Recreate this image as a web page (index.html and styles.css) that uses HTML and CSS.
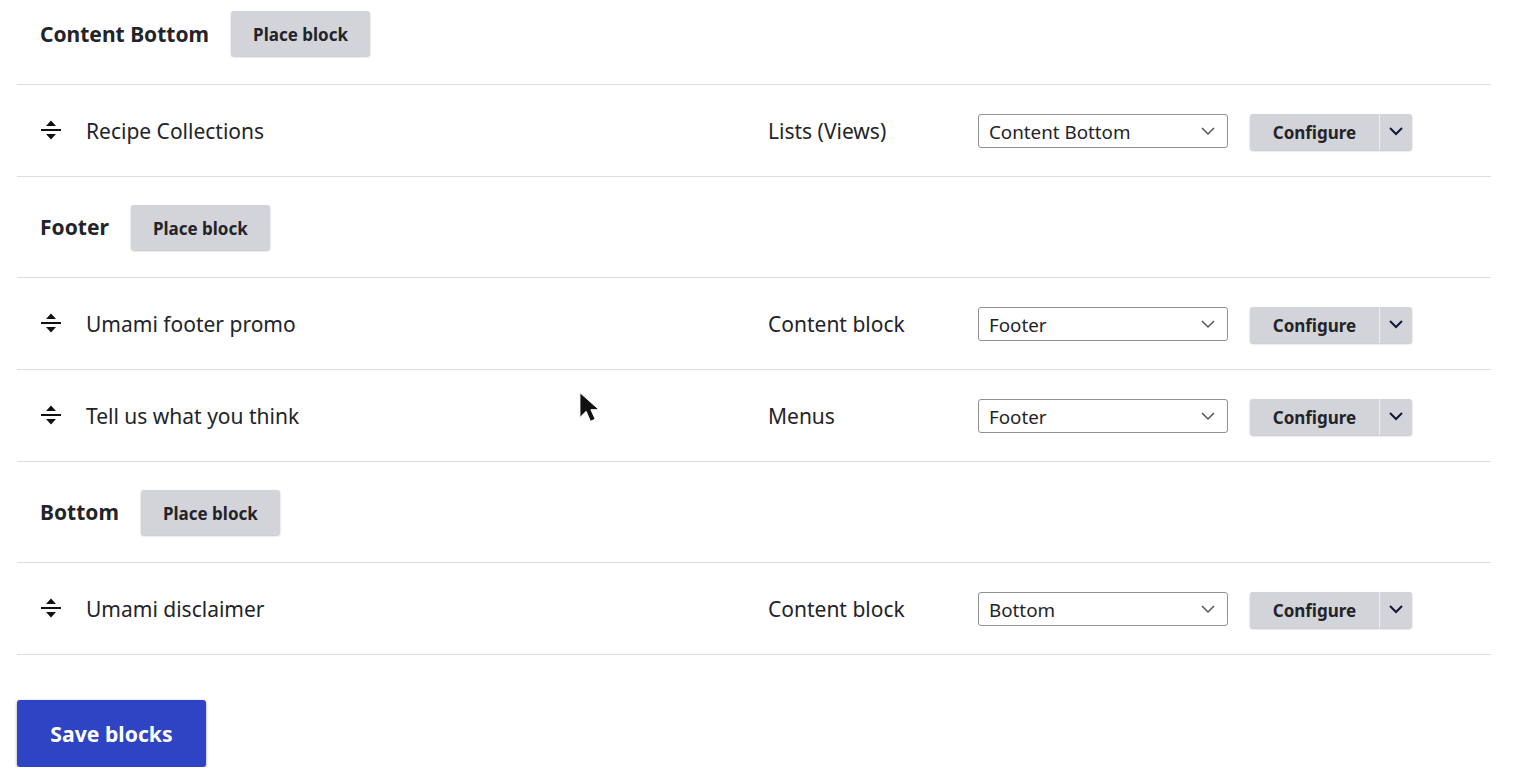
FILE: index.html
```html
<!DOCTYPE html>
<html lang="en">
<head>
  <meta charset="UTF-8">
  <meta name="viewport" content="width=device-width, initial-scale=1.0">
  <title>Block layout</title>
  <link rel="stylesheet" href="styles.css">
</head>
<body>
  <svg class="sprites" width="0" height="0" aria-hidden="true">
    <symbol id="handle" viewBox="0 0 20 20">
      <path d="M10 0.5 15 6H5z M0 9h20v2H0z M5 14h10l-5 5.5z"/>
    </symbol>
  </svg>
  <form class="container">
    <table class="blocks">
      <colgroup>
        <col class="col-name">
        <col class="col-category">
        <col class="col-region">
        <col>
      </colgroup>
      <tbody>
        <tr class="region-row region-first">
          <td colspan="4"><div class="region-head"><span class="region-title">Content Bottom</span><button type="button" class="btn">Place block</button></div></td>
        </tr>
        <tr class="block-row">
          <td><div class="block-name"><svg class="handle"><use href="#handle"/></svg>Recipe Collections</div></td>
          <td>Lists (Views)</td>
          <td><div class="select">Content Bottom<svg class="select-arrow" viewBox="0 0 14 9"><path d="M1 1l6 6 6-6"/></svg></div></td>
          <td><div class="dropbutton"><button type="button" class="drop-main">Configure</button><button type="button" class="drop-toggle" aria-label="List additional actions"><svg viewBox="0 0 14 9"><path d="M1 1l6 6 6-6"/></svg></button></div></td>
        </tr>
        <tr class="region-row">
          <td colspan="4"><div class="region-head"><span class="region-title">Footer</span><button type="button" class="btn">Place block</button></div></td>
        </tr>
        <tr class="block-row">
          <td><div class="block-name"><svg class="handle"><use href="#handle"/></svg>Umami footer promo</div></td>
          <td>Content block</td>
          <td><div class="select">Footer<svg class="select-arrow" viewBox="0 0 14 9"><path d="M1 1l6 6 6-6"/></svg></div></td>
          <td><div class="dropbutton"><button type="button" class="drop-main">Configure</button><button type="button" class="drop-toggle" aria-label="List additional actions"><svg viewBox="0 0 14 9"><path d="M1 1l6 6 6-6"/></svg></button></div></td>
        </tr>
        <tr class="block-row">
          <td><div class="block-name"><svg class="handle"><use href="#handle"/></svg>Tell us what you think</div></td>
          <td>Menus</td>
          <td><div class="select">Footer<svg class="select-arrow" viewBox="0 0 14 9"><path d="M1 1l6 6 6-6"/></svg></div></td>
          <td><div class="dropbutton"><button type="button" class="drop-main">Configure</button><button type="button" class="drop-toggle" aria-label="List additional actions"><svg viewBox="0 0 14 9"><path d="M1 1l6 6 6-6"/></svg></button></div></td>
        </tr>
        <tr class="region-row">
          <td colspan="4"><div class="region-head"><span class="region-title">Bottom</span><button type="button" class="btn">Place block</button></div></td>
        </tr>
        <tr class="block-row">
          <td><div class="block-name"><svg class="handle"><use href="#handle"/></svg>Umami disclaimer</div></td>
          <td>Content block</td>
          <td><div class="select">Bottom<svg class="select-arrow" viewBox="0 0 14 9"><path d="M1 1l6 6 6-6"/></svg></div></td>
          <td><div class="dropbutton"><button type="button" class="drop-main">Configure</button><button type="button" class="drop-toggle" aria-label="List additional actions"><svg viewBox="0 0 14 9"><path d="M1 1l6 6 6-6"/></svg></button></div></td>
        </tr>
      </tbody>
    </table>
    <button type="button" class="btn-save">Save blocks</button>
  </form>
  <svg class="cursor" viewBox="0 0 21 32"><path d="M1 1v26l6.5-6.5 4.5 10.5 5-2.2-4.5-10H21z" fill="#111" stroke="#fff" stroke-width="1"/></svg>
</body>
</html>
```

FILE: styles.css
```css
body {
  margin: 0;
  padding: 0;
  background: #fff;
  color: #232429;
  font-family: "Noto Sans", sans-serif;
  font-size: 21px;
  overflow: hidden;
}
.sprites {
  display: block;
}
.container {
  width: 1474px;
  margin-left: 17px;
  padding-top: 1px;
}
.blocks {
  width: 100%;
  border-collapse: collapse;
  table-layout: fixed;
}
.col-name {
  width: 727px;
}
.col-category {
  width: 210px;
}
.col-region {
  width: 272px;
}
.blocks td {
  padding: 0 0 0 24px;
  border-bottom: 1px solid #dedfe4;
}
.blocks td:first-child {
  padding-left: 23px;
}
.region-row td {
  height: 100px;
}
.region-first td {
  height: 65px;
  padding-bottom: 18px;
}
.block-row td {
  height: 91px;
}
.region-head {
  display: flex;
  align-items: center;
}
.region-title {
  margin-right: 22px;
  font-weight: 700;
}
.btn {
  box-sizing: border-box;
  width: 139px;
  height: 45px;
  padding: 2px 0 0;
  border: 0;
  border-radius: 3px;
  background: #d3d4d9;
  box-shadow: 0 1px 2px rgba(0, 0, 0, 0.25);
  color: #232429;
  font: 700 17px "Noto Sans", sans-serif;
}
.block-name {
  display: flex;
  align-items: center;
  gap: 25px;
  padding-left: 1px;
}
.handle {
  width: 20px;
  height: 20px;
  margin-bottom: 2px;
  fill: #111;
}
.select {
  display: flex;
  align-items: center;
  justify-content: space-between;
  box-sizing: border-box;
  width: 250px;
  height: 34px;
  padding: 2px 12px 0 10px;
  border: 1px solid #919297;
  border-radius: 3px;
  font-size: 18.8px;
}
.select-arrow {
  width: 14px;
  height: 9px;
  fill: none;
  stroke: #55565b;
  stroke-width: 1.5;
}
.dropbutton {
  display: flex;
  width: 162px;
  height: 36px;
  margin-top: 2px;
  border-radius: 3px;
  background: #d3d4d9;
  box-shadow: 0 1px 2px rgba(0, 0, 0, 0.25);
}
.dropbutton button {
  border: 0;
  padding: 0;
  background: none;
}
.drop-main {
  flex: 1;
  color: #232429;
  font: 700 17px "Noto Sans", sans-serif;
  padding-top: 2px !important;
}
.drop-toggle {
  display: flex;
  align-items: center;
  justify-content: center;
  width: 33px;
  border-left: 1px solid #eeeef0 !important;
}
.drop-toggle svg {
  width: 14px;
  height: 9px;
  fill: none;
  stroke: #11173a;
  stroke-width: 2;
}
.btn-save {
  display: block;
  width: 189px;
  height: 67px;
  margin-top: 45px;
  border: 0;
  border-radius: 3px;
  background: #2f44c4;
  box-shadow: 0 1px 3px rgba(0, 0, 0, 0.4);
  color: #fff;
  font: 700 21.2px "Noto Sans", sans-serif;
}
.cursor {
  position: absolute;
  left: 579px;
  top: 391px;
  width: 20px;
  height: 32px;
}
```
